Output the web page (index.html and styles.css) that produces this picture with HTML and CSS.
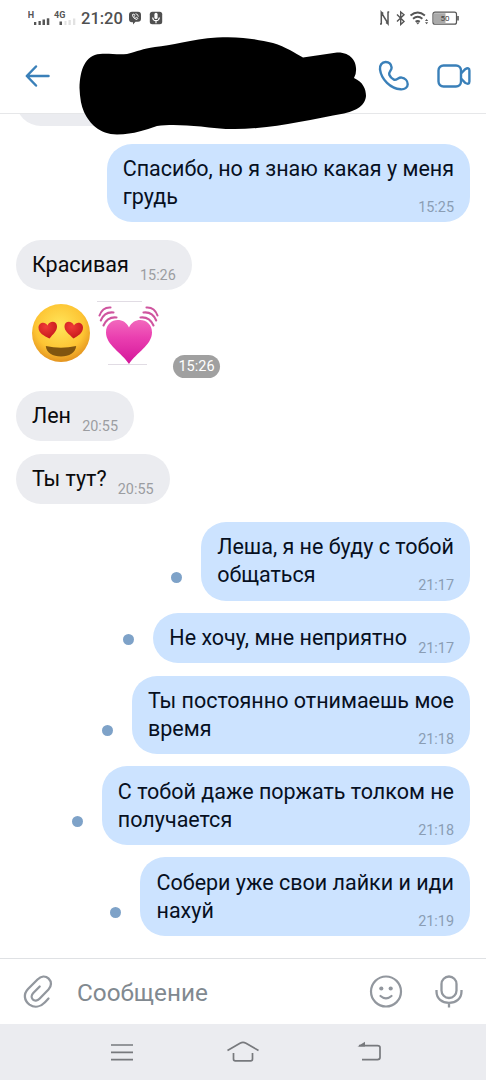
FILE: index.html
```html
<!DOCTYPE html>
<html lang="ru">
<head>
<meta charset="utf-8">
<title>Сообщения</title>
<link rel="stylesheet" href="styles.css">
</head>
<body>
<div class="phone">
  <div class="status">
    <svg class="signal" width="50" height="20" viewBox="0 0 50 20" aria-hidden="true">
      <g fill="#555"><rect x="6" y="13" width="2.300" height="3"/><rect x="10.500" y="12" width="2.300" height="4"/><rect x="14.500" y="10.500" width="2.500" height="5.500"/><rect x="18.800" y="9.300" width="2.500" height="6.700"/><rect x="31.500" y="12.500" width="2.500" height="3.500"/></g>
      <g fill="#e2e2e2"><rect x="36.500" y="12" width="2" height="4"/><rect x="40.500" y="11" width="2.300" height="5"/><rect x="45" y="9.500" width="2.300" height="6.500"/></g>
      <text class="net" x="-.3" y="8.500">H</text><text class="net" x="26" y="8.500">4G</text>
    </svg>
    <span class="clock">21:20</span>
    <svg class="app" width="14" height="14" viewBox="0 0 14 14" aria-hidden="true"><path fill="#505050" d="M4 .8h6q3 0 3 3v4q0 3-3 3H7.500L5 13.500v-2.200H4q-3 0-3-3v-4.500q0-3 3-3z"/><path d="M4.500 3.500q0 4 4.500 5l1-1.200-1.700-1-.8.7q-1.200-.6-1.500-1.800l.8-.8L6 3zM7.500 2.700q2.700.2 2.800 3" fill="none" stroke="#fff" stroke-width=".9"/></svg>
    <svg class="app2" width="14" height="14" viewBox="0 0 14 14" aria-hidden="true"><rect x=".8" y=".8" width="12.400" height="12.400" rx="2.500" fill="#505050"/><rect x="5.400" y="1.800" width="3.200" height="6.200" rx="1.600" fill="#fff"/><path d="M3.600 6.500q.4 3.200 3.400 3.200t3.400-3.200M7 9.700v2.500" fill="none" stroke="#fff" stroke-width="1.200"/></svg>
    <svg class="right" width="80" height="16" viewBox="0 0 80 16" fill="none" stroke="#555" aria-hidden="true">
      <path stroke-width="1.500" d="M2.300 14V2.500L9 13.500V2M1 14h1.800M8.500 2h1.700M2.300 2l2 1.500M9 14l-2-1.500"/>
      <path stroke-width="1.400" d="M18 4.500l7 7-3.300 3V2l3.300 2.700-7 6.800"/>
      <path stroke-width="1.900" d="M31.500 5.600q7.200-6 14.400 0M34 8.800q4.700-3.900 9.400 0M36.600 11.800q2.100-1.700 4.200 0"/>
      <path fill="#555" stroke="none" d="M37 12.500h3.500l-1.700 2zM46 11l1.600-2 1.600 2zM46 12.300l1.600 2 1.600-2z"/>
      <rect x="54" y="2.200" width="23.500" height="12" rx="2" stroke-width="1.200"/><path fill="#aaa" stroke="none" d="M55 3.200h11.500v10H55z"/><path stroke-width="1.600" d="M79 6v4.500"/>
      <text class="charge" x="61.500" y="11">50</text>
    </svg>
  </div>
  <header class="header">
    <svg class="back" width="26" height="24" viewBox="0 0 26 24"><path d="M23.500 12H2M11 2.500L1.800 12l9.200 9.500" fill="none" stroke="#3a80b9" stroke-width="2.500" stroke-linecap="round" stroke-linejoin="round"/></svg>
    <svg class="call" width="32" height="32" viewBox="0 0 32 32"><path d="M7.600 2C3.800 2 1.500 5.400 2 9.400 3.300 19.500 12.500 28.600 22.600 29.300c4 .3 7.100-1.700 7.100-5.100 0-3.500-2.900-6.100-6.100-6.600-3.200-.5-5 3.200-7.700 2-2-.9-3.800-2.700-4.600-4.800-1.100-2.800 2.700-4.500 2.300-7.300C13.200 4.200 10.800 2 7.600 2z" fill="none" stroke="#3a80b9" stroke-width="2.400"/></svg>
    <svg class="video" width="34" height="24" viewBox="0 0 34 24" fill="none" stroke="#3a80b9" stroke-width="2.400" stroke-linejoin="round"><rect x="1.500" y="1.500" width="22.500" height="21" rx="5"/><path d="M24 9.500l4-4.200q4.400-2.500 4.400 1.200v11q0 3.700-4.400 1.200l-4-4.200"/></svg>
  </header>
  <svg class="scribble" width="288" height="100" viewBox="79 36 288 100" aria-hidden="true"><path d="M79.500 88C80 70 85 55 100 54C108 53 117 55 127 54C138 51 142 49 155 47C171 46 191 39 217 37.500C243 36 258 40 273 43C286 47 295 53 303 57.500L337 52.500C351 52 356 62 356 68Q356.500 74 354 78C363 82 366 89 366 96C365 107 354 111 344 113.500C315 119 282 126 257 128C236 130 217 129 201 126.500C185 125 170 124 157 126C145 130 135 134 117 134.500C99 134 90 124 84 112Q80 103 79.500 88z"/></svg>

  <main class="chat">
    <div class="bubble in cut"></div>
    <div class="row mine first"><div class="bubble out"><p class="text">Спасибо, но я знаю какая у меня<br>грудь</p><time>15:25</time></div></div>
    <div class="row reply"><div class="bubble in single"><p class="text">Красивая</p><time>15:26</time></div></div>
    <div class="emoji">
      <svg class="face" width="60" height="60" viewBox="0 0 60 60" aria-hidden="true">
        <defs><radialGradient id="skin" cx=".48" cy=".38" r=".65"><stop offset="0" stop-color="#ffe65a"/><stop offset=".65" stop-color="#fdc433"/><stop offset="1" stop-color="#e08c1c"/></radialGradient><linearGradient id="pink" x1="0" y1="0" x2="0" y2="1"><stop offset="0" stop-color="#f268bd"/><stop offset=".4" stop-color="#ea3fb0"/><stop offset="1" stop-color="#d4169a"/></linearGradient>
        <radialGradient id="eye" cx=".4" cy=".3" r=".8"><stop offset="0" stop-color="#f03a37"/><stop offset="1" stop-color="#c01518"/></radialGradient></defs>
        <circle cx="30" cy="30" r="29" fill="url(#skin)"/>
        <path fill="url(#eye)" d="M18.500 35.500C13 33 7.500 30 7.500 24.500c0-5 6.500-6.500 9-2 2-5 9-5 9.500.5 .3 5-4 8-7.500 12.500z"/>
        <path fill="url(#eye)" d="M42.500 35.500C38 31 33.200 28 33.500 23c.5-5.500 7.500-5.500 9.500-.5 2.500-4.500 9-3 9 2 0 5.500-5 8.500-9.500 11z"/>
        <path fill="#80550f" d="M14.800 43q15 3.500 30.400 0c-.6 6.500-7 10.500-15.200 10.500S15.200 49.500 14.800 43z"/>
      </svg>
      <svg class="heart" width="62" height="66" viewBox="0 0 62 66" aria-hidden="true">
        <path d="M0 1.500h45M11 64.500h39" stroke="#d9d3dd" stroke-width=".8"/>
        <path fill="url(#pink)" d="M32 64C25 53 9 45 9 32.500 9 18 27 16 32 27.500 37 16 55 18 55 32.500 55 45 39 53 32 64z"/>
        <g fill="none" stroke="#cf559f" stroke-width="2.100" stroke-linecap="round"><path d="M2.500 15.500Q5.500 7 13.500 7.500M3.800 20.500Q7.500 11.500 16.500 12.500M6.500 25.500Q10.500 16.500 19.500 17.500M60.500 15.500Q57.500 7 49.500 7.500M59.200 20.500Q55.500 11.500 46.500 12.500M56.500 25.500Q52.500 16.500 43.500 17.500"/></g>
      </svg>
      <time class="badge">15:26</time>
    </div>
    <div class="row len"><div class="bubble in single"><p class="text">Лен</p><time>20:55</time></div></div>
    <div class="row"><div class="bubble in single"><p class="text">Ты тут?</p><time>20:55</time></div></div>
    <div class="row mine late"><i class="dot"></i><div class="bubble out"><p class="text">Леша, я не буду с тобой<br>общаться</p><time>21:17</time></div></div>
    <div class="row mine"><i class="dot"></i><div class="bubble out single"><p class="text">Не хочу, мне неприятно</p><time>21:17</time></div></div>
    <div class="row mine"><i class="dot"></i><div class="bubble out"><p class="text">Ты постоянно отнимаешь мое<br>время</p><time>21:18</time></div></div>
    <div class="row mine"><i class="dot"></i><div class="bubble out"><p class="text">С тобой даже поржать толком не<br>получается</p><time>21:18</time></div></div>
    <div class="row mine"><i class="dot"></i><div class="bubble out"><p class="text">Собери уже свои лайки и иди<br>нахуй</p><time>21:19</time></div></div>
  </main>

  <footer class="composer">
    <svg width="30" height="34" viewBox="0 0 30 34" fill="none" stroke="#92979e" stroke-width="2.300" stroke-linecap="round"><path d="M25.500 23.500L22 27.200C17.500 32 11.500 33 6.500 29.600 1 25.500.3 19 5 14L14.500 4.500C18 1 22.500.6 25.700 3.700 28.800 6.800 28.600 11.300 25.500 14.500L16.500 23.700C14.300 26 11.500 26.200 9.800 24.500 8.100 22.800 8.300 20 10.500 17.800L16.700 11.500"/></svg>
    <span class="placeholder">Сообщение</span>
    <svg width="34" height="34" viewBox="0 0 34 34" fill="none" stroke="#92979e" stroke-width="2.200"><circle cx="17" cy="16.500" r="15"/><g fill="#92979e" stroke="none"><circle cx="12.300" cy="13.500" r="2.100"/><circle cx="21.700" cy="13.500" r="2.100"/></g><path d="M11.500 21q5.500 4.800 11 0" stroke-linecap="round"/></svg>
    <svg class="mic" width="28" height="34" viewBox="0 0 28 34" fill="none" stroke="#92979e" stroke-width="2.300"><rect x="6.500" y="1.500" width="15" height="21.500" rx="7.500"/><path d="M1.500 15v1.500c0 7 5.500 11.300 12.500 11.300S26.500 23.500 26.500 16.500V15M14 27.800V32.500"/></svg>
  </footer>
  <nav class="nav">
    <svg width="24" height="20" viewBox="0 0 24 20"><path d="M1 3h22M1 10.300h22M1 17.600h22" stroke="#77797d" stroke-width="1.700"/></svg>
    <svg class="home" width="34" height="22" viewBox="0 0 34 22" fill="none" stroke="#77797d" stroke-width="1.700" stroke-linejoin="round"><path d="M1.500 9.500L14 2.200q3-1.500 6 0L32.500 9.500M7.500 12v6q0 1.800 1.800 1.800h15.400q1.800 0 1.800-1.800v-6"/></svg>
    <svg width="26" height="22" viewBox="0 0 26 22" fill="none" stroke="#77797d" stroke-width="1.700"><path d="M2 4.600h18.500q2.500 0 2.500 2v10q0 2-2.500 2H5"/><path fill="#77797d" stroke="none" d="M.5 5.400L8 .8v4.600z"/></svg>
  </nav>
</div>
</body>
</html>
```

FILE: styles.css
```css
* { box-sizing: border-box; }
body { margin: 0; background: #fff; font-family: Roboto, "Liberation Sans", sans-serif; }
svg { display: block; flex: none; }
.phone { position: relative; width: 486px; height: 1080px; overflow: hidden; display: flex; flex-direction: column; }
.status { height: 38px; flex: none; display: flex; align-items: flex-start; padding: 9px 0 0 28px; }
.net { font-size: 9px; font-weight: 700; fill: #555; }
.clock { margin: -1px 0 0 3px; width: 43px; font-size: 16.5px; line-height: 21px; font-weight: 500; color: #505050; white-space: nowrap; }
.app { margin: 2px 0 0 4px; }
.app2 { margin: 2px 0 0 7px; }
.right { margin: 1px 27px 0 auto; }
.charge { font-size: 8px; fill: #444; stroke: none; }
.header { height: 75px; flex: none; display: flex; align-items: center; padding: 0 15px 0 25px; }
.call { margin-left: auto; }
.video { margin-left: 27px; }
.scribble { position: absolute; left: 79px; top: 36px; z-index: 2; fill: #000; }
.chat { height: 845px; flex: none; border-top: 1px solid #e6e7e9; overflow: hidden; padding: 0 16px; display: flex; flex-direction: column; }
.row { display: flex; flex: none; align-items: flex-end; margin-top: 12.3px; }
.mine { justify-content: flex-end; }
.row.first { margin-top: 17.6px; }
.row.reply { margin-top: 17.8px; }
.row.late { margin-top: 18px; }
.bubble { display: grid; flex: none; padding: 11.2px 16px 11px; border-radius: 25px; }
.in { background: #ebecf0; }
.out { background: #cce3ff; }
.cut { width: 150px; height: 51px; margin-top: -39px; padding: 0; }
.text { grid-area: 1 / 1; margin: 0; font-size: 21.5px; line-height: 28.2px; color: #07101f; white-space: nowrap; }
.in .text { color: #0a0a0c; }
.bubble time { grid-area: 1 / 1; justify-self: end; align-self: end; font-size: 14.4px; line-height: 18px; margin-bottom: -5.8px; color: #8a9db4; }
.bubble.in time { color: #9b9da1; }
.single .text { padding-right: 47px; }
.emoji { display: flex; height: 88px; flex: none; padding: 13px 0 0 15px; align-items: flex-start; }
.heart { margin: -3px 0 0 6px; }
.badge { margin: 52px 0 0 14px; width: 47px; height: 23px; border-radius: 12px; background: #a0a0a0; color: #fff; font-size: 14.5px; line-height: 23px; text-align: center; }
.row.len { margin-top: 12.5px; }
.dot { width: 11px; height: 11px; border-radius: 50%; background: #7ea2c8; margin: 0 19px 18px 0; }
.composer { height: 66px; flex: none; border-top: 1px solid #dfe1e4; display: flex; align-items: center; padding: 0 23px; }
.placeholder { margin: 1px auto 0 24px; font-size: 24.3px; color: #818990; }
.mic { margin-left: 32px; }
.nav { height: 56px; background: #ebecf0; flex: none; display: flex; align-items: center; padding: 0 103px 0 110px; justify-content: space-between; }
.home { margin-right: 5px; }
```
